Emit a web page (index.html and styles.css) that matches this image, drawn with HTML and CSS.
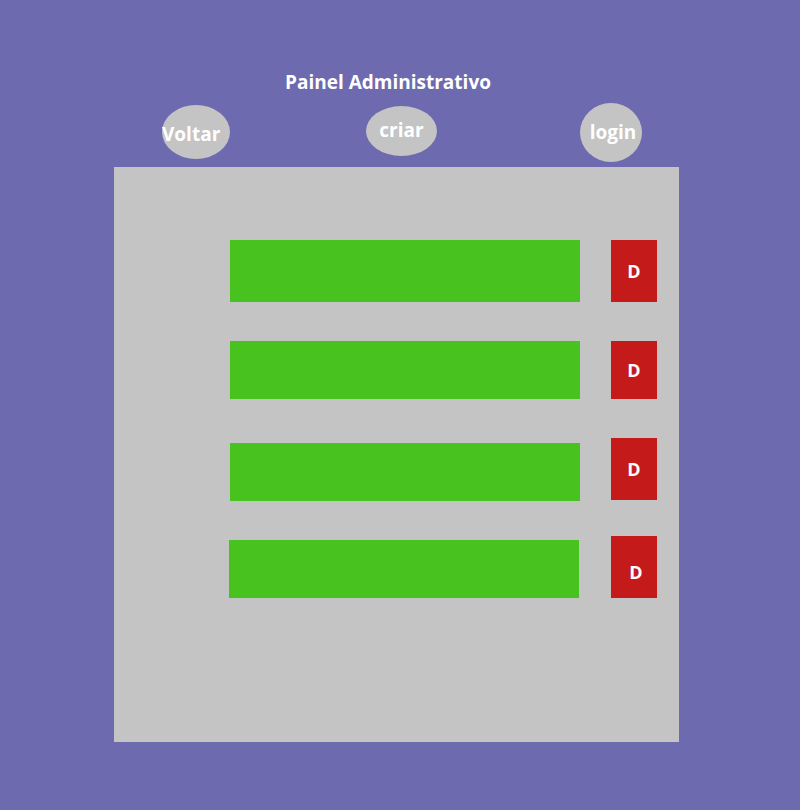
FILE: index.html
```html
<!DOCTYPE html>
<html lang="pt-BR">
<head>
    <meta charset="UTF-8">
    <meta name="viewport" content="width=device-width, initial-scale=1.0">
    <title>Painel Administrativo</title>
    <link rel="stylesheet" href="styles.css">
</head>
<body>

<header class="top">
    <h1>Painel Administrativo</h1>
    <nav class="nav-row">
        <button type="button" class="nav-btn btn-voltar">Voltar</button>
        <button type="button" class="nav-btn btn-criar">criar</button>
        <button type="button" class="nav-btn btn-login">login</button>
    </nav>
</header>

<main class="panel">
    <div class="item-row row-1">
        <div class="item-bar"></div>
        <button type="button" class="del-btn">D</button>
    </div>
    <div class="item-row row-2">
        <div class="item-bar"></div>
        <button type="button" class="del-btn">D</button>
    </div>
    <div class="item-row row-3">
        <div class="item-bar"></div>
        <button type="button" class="del-btn">D</button>
    </div>
    <div class="item-row row-4">
        <div class="item-bar"></div>
        <button type="button" class="del-btn">D</button>
    </div>
</main>

</body>
</html>
```
FILE: styles.css
```css
/* Base */
body {
    margin: 0; height: 810px; overflow: hidden;
    background-color: #6e6aaf;
    font-family: "Open Sans", "Lato", sans-serif;
}

/* Header: title + round buttons */
.top { padding-top: 70px; }
h1 {
    margin: 0; width: 776px; text-align: center;
    font-size: 19px; line-height: 24px; font-weight: 700; color: #fff;
}
.nav-row {
    display: flex; align-items: flex-start;
    padding-left: 162px; margin-top: 9px;
}
.nav-btn {
    border: none; border-radius: 50%; background: #c4c4c4;
    color: #fff; font-family: inherit; font-weight: 700; font-size: 19px;
    padding: 0; cursor: pointer;
}
.btn-voltar {
    width: 68px; height: 54px; margin-top: 2px;
    text-align: left; padding-top: 4px;
}
.btn-criar {
    width: 71px; height: 50px; margin-top: 3px; margin-left: 136px;
    padding-bottom: 3px;
}
.btn-login {
    width: 62px; height: 59px; margin-left: 143px;
    padding-left: 4px; padding-bottom: 2px;
}

/* Panel with items */
.panel {
    width: 565px; height: 575px; margin: 5px 0 0 114px;
    background: #c4c4c4; padding-top: 73px; box-sizing: border-box;
}
.item-row { display: flex; align-items: flex-start; padding-left: 116px; }
.item-bar { width: 350px; height: 58px; background: #48c21e; }
.del-btn {
    width: 46px; height: 62px; margin-left: 31px;
    border: none; background: #c51a1a; color: #fff; padding: 0;
    font-family: inherit; font-weight: 700; font-size: 18px; cursor: pointer;
}
.row-1 .item-bar { height: 62px; }
.row-2 { margin-top: 39px; }
.row-2 .del-btn { height: 58px; }
.row-3 { margin-top: 39px; }
.row-3 .item-bar { margin-top: 5px; }
.row-4 { margin-top: 35px; padding-left: 115px; }
.row-4 .item-bar { margin-top: 4px; }
.row-4 .del-btn { margin-left: 32px; padding: 10px 0 0 4px; }
```
